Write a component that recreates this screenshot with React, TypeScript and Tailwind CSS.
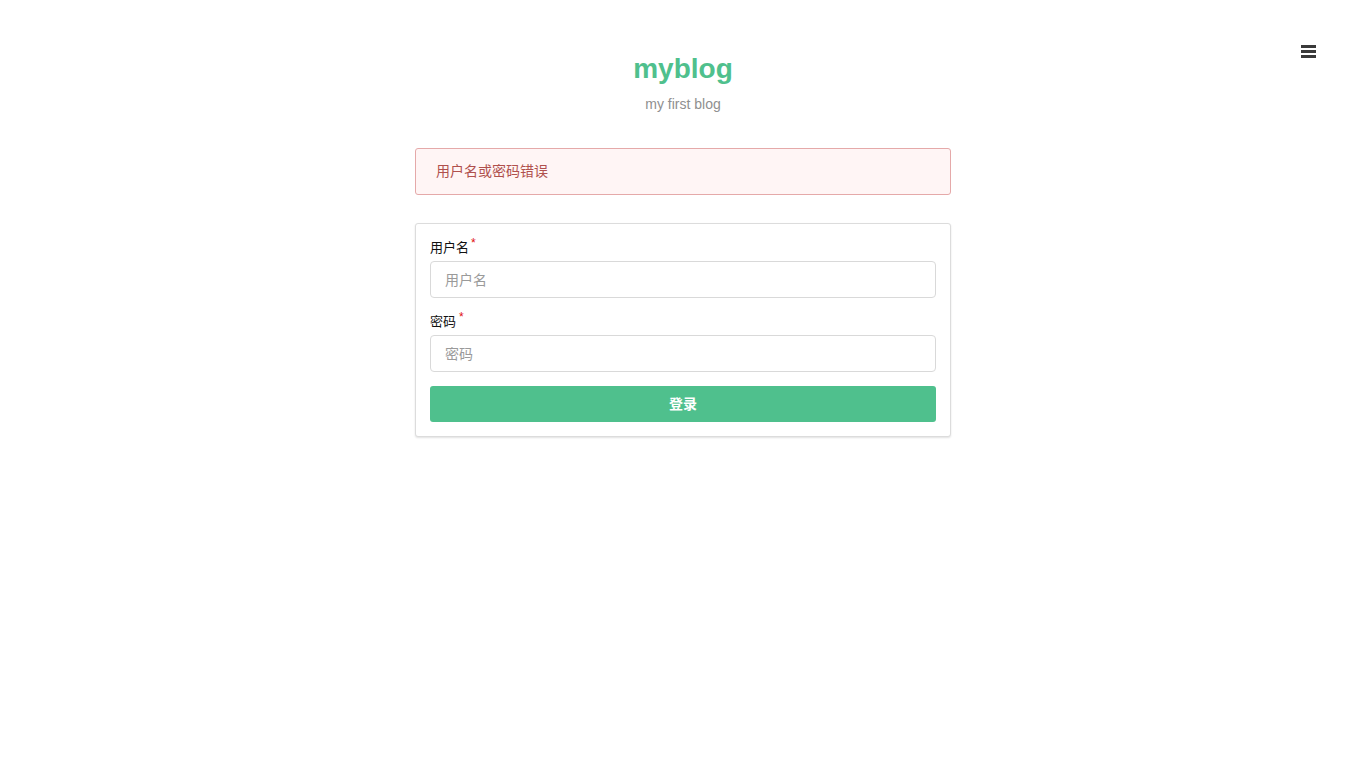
import React from "react";

export default function App() {
  const font = { fontFamily: '"Liberation Sans", "Noto Sans CJK SC", Arial, sans-serif' };
  return (
    <div className="relative min-h-[768px] w-full bg-white" style={font}>
      <button className="absolute right-[50px] top-[45px] flex flex-col gap-[2px]" aria-label="menu">
        <span className="block h-[3px] w-[15px] bg-[#3a3a3a]" />
        <span className="block h-[3px] w-[15px] bg-[#3a3a3a]" />
        <span className="block h-[3px] w-[15px] bg-[#3a3a3a]" />
      </button>
      <div className="mx-auto w-[536px] pt-[51px]">
        <h1 className="text-center text-[28px] font-bold leading-[36px] text-[#4fc08d]">myblog</h1>
        <p className="mt-[7px] text-center text-[14px] leading-[20px] text-[#8f8f8f]">my first blog</p>
        <div className="mt-[34px] flex h-[47px] items-center rounded-[3px] border border-[#e5a9a9] bg-[#fff5f5] px-[20px] text-[14px] text-[#b0504d]">
          用户名或密码错误
        </div>
        <form
          className="mt-[28px] rounded-[3px] border border-[#dcdcdc] bg-white p-[14px] shadow-[0_1px_2px_rgba(0,0,0,0.12)]"
          onSubmit={(e) => e.preventDefault()}
        >
          <label className="block h-[18px] overflow-visible pt-[1px] text-[13px] leading-[17px] text-[#111]">
            用户名<span className="relative top-[-5px] ml-[2px] text-[12px] leading-none text-[#e01010]">*</span>
          </label>
          <input
            className="mt-[5px] block h-[37px] w-full rounded-[4px] border border-[#d9d9d9] px-[14px] text-[14px] outline-none placeholder:text-[#9a9a9a]"
            placeholder="用户名"
          />
          <label className="mt-[14px] block h-[18px] overflow-visible pt-[1px] text-[13px] leading-[17px] text-[#111]">
            密码<span className="relative top-[-5px] ml-[3px] text-[12px] leading-none text-[#e01010]">*</span>
          </label>
          <input
            type="password"
            className="mt-[5px] block h-[37px] w-full rounded-[4px] border border-[#d9d9d9] px-[14px] text-[14px] outline-none placeholder:text-[#9a9a9a]"
            placeholder="密码"
          />
          <button className="mt-[14px] block h-[36px] w-full rounded-[3px] bg-[#4fc08d] text-[14px] font-bold text-white">
            登录
          </button>
        </form>
      </div>
    </div>
  );
}
